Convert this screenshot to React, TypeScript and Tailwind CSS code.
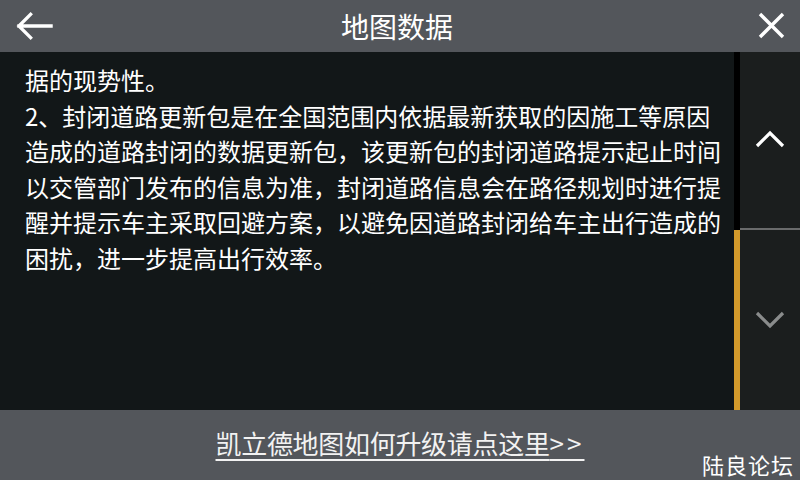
import React from "react";

const lines = [
  "据的现势性。",
  "2、封闭道路更新包是在全国范围内依据最新获取的因施工等原因",
  "造成的道路封闭的数据更新包，该更新包的封闭道路提示起止时间",
  "以交管部门发布的信息为准，封闭道路信息会在路径规划时进行提",
  "醒并提示车主采取回避方案，以避免因道路封闭给车主出行造成的",
  "困扰，进一步提高出行效率。",
];

const font = { fontFamily: '"Noto Sans CJK SC", "Noto Sans", sans-serif' };

const App: React.FC = () => {
  return (
    <div className="relative w-[800px] h-[480px] flex flex-col overflow-hidden bg-[#121718]" style={font}>
      {/* header */}
      <div className="h-[52px] shrink-0 bg-[#53565b] flex items-center justify-between px-[14px]">
        <div className="w-[40px] flex">
          <svg width="40" height="30" viewBox="0 0 40 30" className="ml-[1px]">
            <path d="M16 3 L4 15 L16 27 M4 15 H37" fill="none" stroke="white" strokeWidth="3.4" strokeLinecap="square" />
          </svg>
        </div>
        <div className="text-[28px] leading-none text-white mr-[6px]">地图数据</div>
        <div className="w-[40px] flex justify-end">
          <svg width="30" height="30" viewBox="0 0 30 30">
            <path d="M4 3 L27 26 M27 3 L4 26" fill="none" stroke="white" strokeWidth="3.4" />
          </svg>
        </div>
      </div>

      {/* content */}
      <div className="flex-1 flex">
        <div className="flex-1 pl-[25px] pt-[10px] text-white text-[24px] leading-[35.5px]">
          {lines.map((l, i) => (
            <div key={i} className="whitespace-nowrap">
              {l}
            </div>
          ))}
        </div>
        <div className="w-[6px] flex flex-col">
          <div className="h-[178px] bg-black" />
          <div className="flex-1 bg-[#d39a2b]" />
        </div>
        <div className="w-[60px] flex flex-col bg-[#1b1e1e]">
          <div className="h-[178px] flex items-center justify-center border-b-2 border-[#6a6b6c]">
            <svg width="30" height="18" viewBox="0 0 30 18" className="mt-[-2px]">
              <path d="M2 16 L15 3 L28 16" fill="none" stroke="white" strokeWidth="3.2" />
            </svg>
          </div>
          <div className="flex-1 flex items-center justify-center">
            <svg width="30" height="18" viewBox="0 0 30 18">
              <path d="M2 2 L15 15 L28 2" fill="none" stroke="#8a8c8c" strokeWidth="3.2" />
            </svg>
          </div>
        </div>
      </div>

      {/* footer */}
      <div className="h-[70px] shrink-0 bg-[#53565b] flex justify-center">
        <span className="mt-[17px] h-fit text-[26px] leading-[32px] text-[#f2f2f2] underline decoration-2 underline-offset-[5px] tracking-[-0.3px]">
          凯立德地图如何升级请点这里<span className="tracking-[3px]">&gt;&gt;</span>
        </span>
      </div>

      {/* watermark */}
      <div className="absolute right-[6px] bottom-[5px] text-[22px] leading-none text-white tracking-[1px]" style={{ fontFamily: '"Noto Sans CJK SC", sans-serif' }}>
        陆良论坛
      </div>
    </div>
  );
};

export default App;
